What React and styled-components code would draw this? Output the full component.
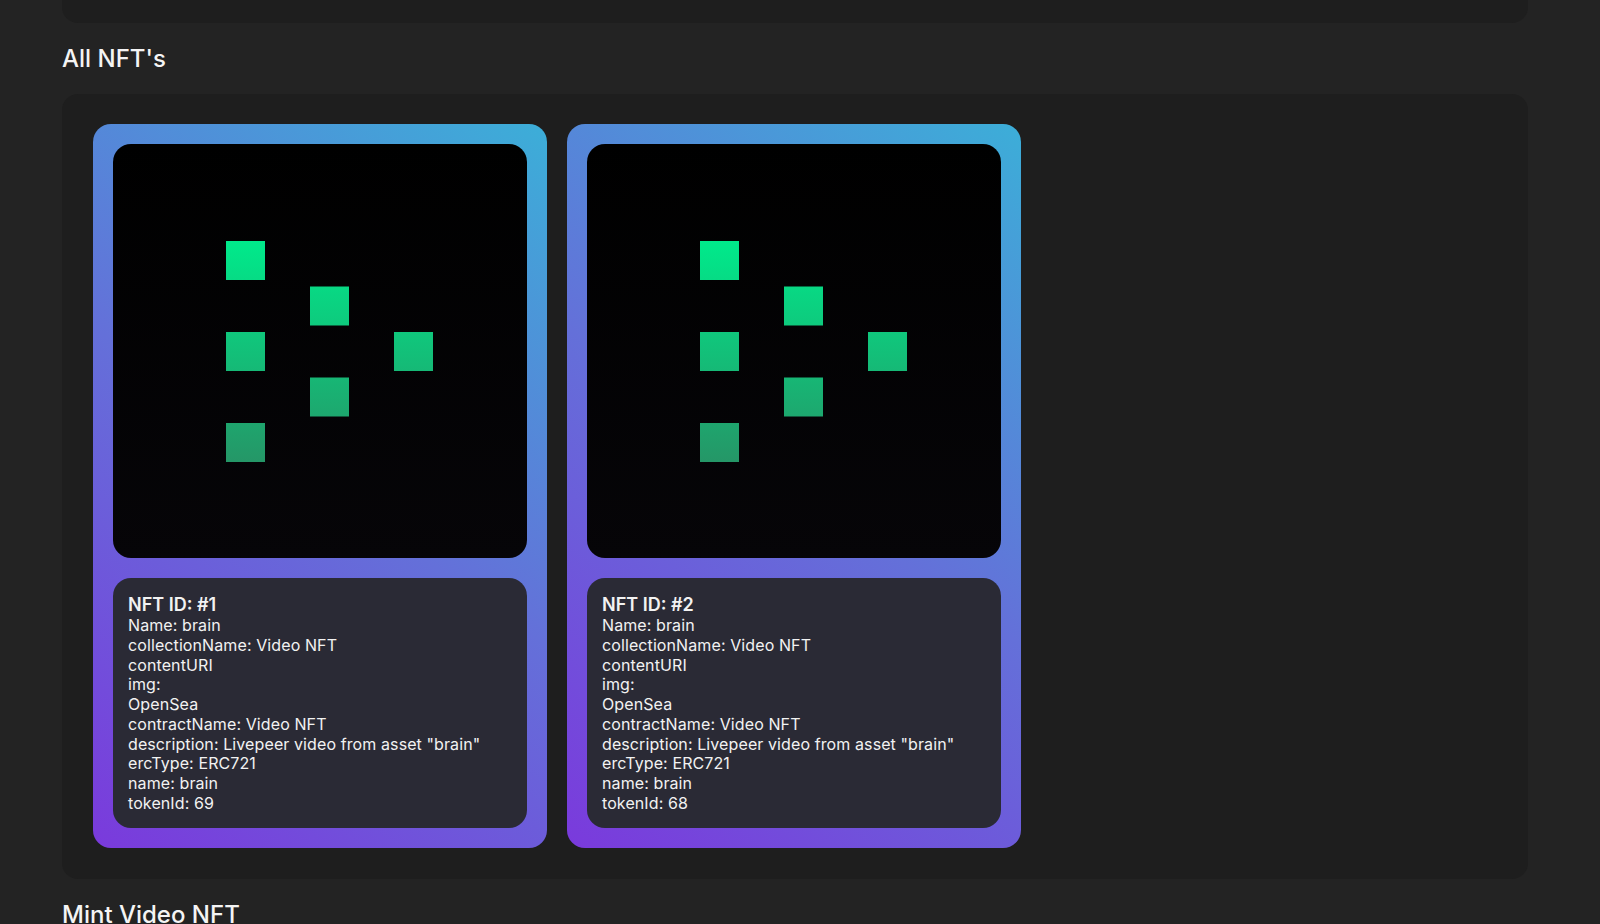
import styled, { createGlobalStyle } from "styled-components";

const GlobalStyle = createGlobalStyle`
  body {
    margin: 0;
    background-color: #232323;
    font-family: Inter, "Noto Sans", sans-serif;
    color: #f2f2f2;
  }
`;

const NFTS = [
  { id: 1, tokenId: 69 },
  { id: 2, tokenId: 68 },
];

const PIXELS = [
  [0, 0],
  [1, 1],
  [0, 2],
  [2, 2],
  [1, 3],
  [0, 4],
];

const Thumbnail = () => (
  <svg width="414" height="414" viewBox="0 0 414 414">
    <defs>
      <linearGradient id="px" x1="0" y1="97" x2="0" y2="319" gradientUnits="userSpaceOnUse">
        <stop offset="0" stopColor="#00ea8b" />
        <stop offset="1" stopColor="#259667" />
      </linearGradient>
    </defs>
    {PIXELS.map(([c, r]) => (
      <rect
        key={`${c}-${r}`}
        x={113 + c * 84}
        y={97 + r * 45.5}
        width="39"
        height="39"
        fill="url(#px)"
      />
    ))}
  </svg>
);

export default function App() {
  return (
    <>
      <GlobalStyle />
      <Page>
        <TopPanel />
        <Heading>All NFT's</Heading>
        <Gallery>
          {NFTS.map((nft) => (
            <Card key={nft.id}>
              <Media>
                <Thumbnail />
              </Media>
              <Info>
                <InfoTitle>NFT ID: #{nft.id}</InfoTitle>
                <Line>Name: brain</Line>
                <Line>collectionName: Video NFT</Line>
                <Line>contentURI</Line>
                <Line>img:</Line>
                <Line>OpenSea</Line>
                <Line>contractName: Video NFT</Line>
                <Line>description: Livepeer video from asset "brain"</Line>
                <Line>ercType: ERC721</Line>
                <Line>name: brain</Line>
                <Line>tokenId: {nft.tokenId}</Line>
              </Info>
            </Card>
          ))}
        </Gallery>
        <Heading>Mint Video NFT</Heading>
      </Page>
    </>
  );
}

const Page = styled.div`
  width: 1466px;
  padding-left: 62px;
  height: 924px;
  overflow: hidden;
`;

const TopPanel = styled.div`
  height: 23px;
  background-color: #1e1e1e;
  border-radius: 0 0 16px 16px;
`;

const Heading = styled.h2`
  margin: 21px 0 21px;
  font-size: 24px;
  font-weight: 500;
  line-height: 29px;
  color: #f4f4f4;
`;

const Gallery = styled.div`
  display: flex;
  gap: 20px;
  padding: 30px 31px 31px;
  background-color: #1e1e1e;
  border-radius: 16px;
`;

const Card = styled.div`
  display: flex;
  flex-direction: column;
  gap: 20px;
  width: 414px;
  padding: 20px;
  border-radius: 18px;
  background: linear-gradient(35deg, #7a3adc 0%, #6470d9 50%, #3caed8 100%);
`;

const Media = styled.div`
  width: 414px;
  height: 414px;
  border-radius: 18px;
  overflow: hidden;
  background: linear-gradient(180deg, #000000, #060508);
  svg {
    display: block;
  }
`;

const Info = styled.div`
  display: flex;
  flex-direction: column;
  height: 250px;
  box-sizing: border-box;
  padding: 16px 15px 12px;
  border-radius: 18px;
  background-color: #2a2a35;
`;

const InfoTitle = styled.div`
  font-size: 18px;
  font-weight: 600;
  line-height: 22px;
`;

const Line = styled.div`
  font-size: 16px;
  line-height: 19.75px;
  letter-spacing: 0.1px;
`;
